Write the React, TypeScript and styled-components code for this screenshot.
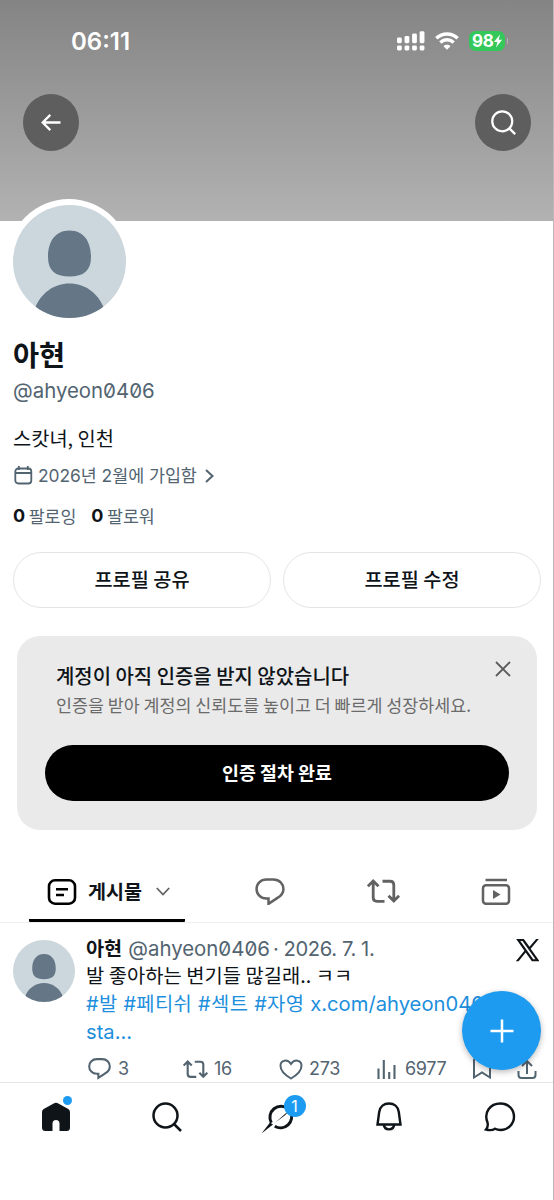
import React from 'react';
import styled, { createGlobalStyle } from 'styled-components';

const GlobalStyle = createGlobalStyle`
  *, *::before, *::after { box-sizing: border-box; }
  body { margin: 0; background: #fff; }
`;

const KR = `"Noto Sans CJK KR", sans-serif`;
const LATIN = `Inter, "Noto Sans CJK KR", sans-serif`;

const Screen = styled.div`
  width: 554px;
  height: 1200px;
  display: flex;
  flex-direction: column;
  overflow: hidden;
  background: #fff;
  border-right: 1px solid #b9b9b9;
  color: #0f1419;
  font-family: ${KR};
`;

const Banner = styled.header`
  flex: none;
  height: 221px;
  background: linear-gradient(#848484, #b2b2b2);
`;

const StatusBar = styled.div`
  height: 82px;
  padding: 0 45px 0 71px;
  display: flex;
  align-items: center;
  color: #fff;
`;

const Clock = styled.span`
  flex: 1;
  padding-top: 1px;
  font: 600 24px/30px Inter, sans-serif;
`;

const Battery = styled.span`
  display: flex;
  align-items: center;
  width: 36px;
  height: 20px;
  margin-left: 10px;
  padding-left: 3px;
  border-radius: 6.5px;
  background: #34c759;
  font: 700 17px/20px Inter, sans-serif;
  letter-spacing: -0.4px;
`;

const BatteryCap = styled.span`
  width: 1.5px;
  height: 6px;
  margin-left: 1.5px;
  border-radius: 0 2px 2px 0;
  background: #b5b5b5;
`;

const BannerNav = styled.nav`
  display: flex;
  justify-content: space-between;
  padding: 12px 22px 0 23px;
`;

const RoundButton = styled.button`
  width: 56px;
  height: 57px;
  padding: 0;
  border: 0;
  border-radius: 50%;
  background: #5e5e5e;
  color: #fff;
  display: grid;
  place-items: center;
`;

const Profile = styled.section`
  flex: none;
  display: flex;
  flex-direction: column;
  align-items: flex-start;
  padding: 0 12px 0 13px;
`;

const AvatarRing = styled.div`
  margin: -22px 0 0 -6px;
  padding: 5.5px;
  height: 124px;
  border-radius: 50%;
  background: #fff;
  position: relative;
`;

const Name = styled.h1`
  margin: 13px 0 0;
  font-size: 28.4px;
  font-weight: 700;
  line-height: 36px;
`;

const Handle = styled.span`
  font-family: ${LATIN};
  font-size: 20.4px;
  line-height: 28px;
  color: #536471;
  font-feature-settings: "zero";
`;

const ProfileHandle = styled(Handle)`
  margin-top: 5px;
`;

const Bio = styled.p`
  margin: 18px 0 0;
  font-size: 19.8px;
  line-height: 30px;
`;

const Joined = styled.div`
  display: flex;
  align-items: center;
  height: 26px;
  margin-top: 10px;
  color: #536471;
  font-family: ${LATIN};
  font-size: 17.4px;
  line-height: 24px;
  letter-spacing: -0.04px;

  span { margin: -1px 8px 0 5px; }
`;

const Follows = styled.div`
  display: flex;
  align-items: center;
  height: 26px;
  margin-top: 14px;
  font-size: 17.3px;
  line-height: 24px;
  color: #536471;

  b {
    font: 700 18px/24px Inter, sans-serif;
    color: #0f1419;
    margin-right: 3.5px;
  }
  span { margin: -1px 15px 0 0; }
`;

const ProfileActions = styled.div`
  align-self: stretch;
  display: grid;
  grid-template-columns: 1fr 1fr;
  gap: 12px;
  margin-top: 23px;
`;

const OutlineButton = styled.button`
  height: 56px;
  padding: 0 0 2px;
  border: 1.5px solid #e4e4e4;
  border-radius: 28px;
  background: #fff;
  color: #0f1419;
  font: 500 19.7px/28px ${KR};
`;

const VerifyCard = styled.section`
  flex: none;
  display: flex;
  flex-direction: column;
  height: 194px;
  margin: 28px 16px 0 17px;
  padding: 25px 28px 0;
  border-radius: 23px;
  background: #eaeaea;
`;

const CardHeading = styled.div`
  display: flex;
  justify-content: space-between;
  height: 84px;
`;

const CardCopy = styled.div`
  padding-left: 11px;
  white-space: nowrap;

  h2 {
    margin: 0;
    font-size: 19.95px;
    font-weight: 500;
    line-height: 30px;
  }
  p {
    margin: 0;
    font-size: 17.35px;
    line-height: 28px;
    color: #6b6b6b;
  }
`;

const CloseIcon = styled.svg`
  flex: none;
  margin: 0 -2px 0 0;
`;

const SolidButton = styled.button`
  height: 56px;
  padding: 0 0 2px;
  border: 0;
  border-radius: 28px;
  background: #000;
  color: #fff;
  font: 700 18.4px/28px ${KR};
`;

const Tabs = styled.nav`
  flex: none;
  display: flex;
  height: 93px;
  padding-left: 29px;
  border-bottom: 1px solid #eceeef;
`;

const Tab = styled.div`
  flex: 1;
  padding: 31px 1px 0 0;
  display: flex;
  align-items: center;
  justify-content: center;
  color: #626262;
`;

const ActiveTab = styled.div`
  flex: none;
  display: flex;
  align-items: center;
  width: 156px;
  margin-right: 29px;
  padding: 34px 0 0 18px;
  border-bottom: 3px solid #000;
  border-radius: 1px;
  color: #0f1419;
  font-size: 19.6px;
  line-height: 28px;
  font-weight: 700;

  span { margin: -2px 14px 0 11px; }
`;

const Tweet = styled.article`
  position: relative;
  flex: none;
  display: flex;
  height: 159px;
  padding: 12px 0 0 13px;
`;

const TweetAvatar = styled.div`
  flex: none;
  width: 73px;
  padding-top: 5px;
`;

const TweetBody = styled.div`
  flex: 1;
  min-width: 0;
`;

const TweetHead = styled.div`
  display: flex;
  align-items: center;
  height: 27px;
  padding-right: 14px;
  color: #536471;

  b {
    color: #0f1419;
    font-size: 19.7px;
    line-height: 27px;
    margin: -2px 6px 0 0;
  }
`;

const LogoSvg = styled.svg`
  margin-top: 3px;
`;

const TweetDate = styled.span`
  flex: 1;
  padding-left: 3px;
  font-family: ${LATIN};
  font-size: 20.2px;
  line-height: 27px;
  letter-spacing: -0.4px;
`;

const TweetText = styled.div`
  font-size: 19.85px;
`;

const TextLine = styled.p`
  margin: -1px 0 1px;
  height: 28px;
  line-height: 28px;
  white-space: nowrap;
`;

const Hashtags = styled.a`
  font-family: ${LATIN};
  color: #1d8fdd;
  letter-spacing: 0.35px;
`;

const Link = styled.a`
  font-family: ${LATIN};
  font-size: 20.2px;
  color: #1d8fdd;
`;

const Stats = styled.div`
  display: flex;
  align-items: center;
  height: 28px;
  margin: 10px 0 0 2px;
  color: #536471;
`;

const Stat = styled.div<{ $width: number; $gap?: number }>`
  flex: none;
  display: flex;
  align-items: center;
  gap: ${p => p.$gap ?? 6}px;
  width: ${p => p.$width}px;
  font: 400 18px/24px Inter, sans-serif;
  letter-spacing: -0.3px;
`;

const Compose = styled.button`
  position: absolute;
  right: 12px;
  top: 68px;
  width: 79px;
  height: 79px;
  padding: 0;
  border: 0;
  border-radius: 50%;
  background: #1d9bf0;
  box-shadow: 0 2px 6px rgba(0, 0, 0, 0.28);
  display: grid;
  place-items: center;
`;

const BottomBar = styled.nav`
  flex: 1;
  display: grid;
  grid-template-columns: repeat(5, 111px);
  align-items: start;
  justify-items: center;
  padding-top: 16px;
  border-top: 1px solid #e4e7e9;
  color: #0f1419;
  position: relative;
  background: #fff;
`;

const NavItem = styled.div<{ $top?: number }>`
  position: relative;
  height: 36px;
  padding-top: ${p => p.$top ?? 0}px;
`;

const Dot = styled.i`
  position: absolute;
  top: -3px;
  right: -1px;
  width: 9px;
  height: 9px;
  border-radius: 50%;
  background: #1d9bf0;
`;

const Badge = styled.span`
  position: absolute;
  top: -4px;
  right: -6px;
  width: 22px;
  height: 22px;
  border-radius: 50%;
  background: #1d9bf0;
  color: #fff;
  font: 400 16px/22px Inter, sans-serif;
  text-align: center;
`;

const Avatar = ({ size, id }: { size: number; id: string }) => (
  <svg width={size} height={size} viewBox="0 0 113 113" display="block">
    <clipPath id={id}><circle cx="56.5" cy="56.5" r="56.5" /></clipPath>
    <g clipPath={`url(#${id})`}>
      <rect width="113" height="113" fill="#ccd6dd" />
      <path fill="#657786" d="M56.5 25.5C71 25.5 78 37 78 52C78 65.500 71 71.500 56.500 71.500S35 65.500 35 52C35 37 42 25.500 56.500 25.500ZM56.500 78.500C72 78.500 85 88 91 103L91 113H22V103C28 88 41 78.500 56.500 78.500Z" />
    </g>
  </svg>
);

const SignalIcon = () => (
  <svg width="28" height="21" viewBox="0 0 28 21" fill="#fff">
    {[0, 1, 2, 3].map(i => (
      <g key={i}>
        <rect x={i * 7.55} y={[6.5, 5, 2.5, 0.2][i]} width="4.8" height={[5.7, 7.2, 9.7, 12][i]} rx="1.4" />
        <rect x={i * 7.55} y="14.5" width="4.8" height="5" rx="1.4" />
      </g>
    ))}
  </svg>
);

const WifiSvg = styled.svg`
  margin-left: 10px;
`;

const WifiIcon = () => (
  <WifiSvg width="24" height="18" viewBox="0 0 24 18" fill="none" stroke="#fff" strokeWidth="3.4">
    <path d="M1.300 6.300C7.300.500 16.700.500 22.700 6.300" />
    <path d="M5.300 10.500C9.200 6.900 14.800 6.900 18.700 10.500" />
    <path fill="#fff" stroke="none" d="M12 17.700L8.500 14.200C10.300 12.300 13.700 12.300 15.500 14.200Z" />
  </WifiSvg>
);

const BoltIcon = () => (
  <svg width="10" height="14" viewBox="0 0 9 14" fill="#fff">
    <path d="M6.500.5L.4 8H3.900L2.500 13.500L8.600 5.800H5.200Z" />
  </svg>
);

const SearchIcon = ({ size, stroke }: { size: number; stroke: number }) => (
  <svg width={size} height={size} viewBox="0 0 30 30" fill="none" stroke="currentColor" strokeWidth={stroke}>
    <circle cx="13.500" cy="13.500" r="12" />
    <path d="M22 22L29 29" />
  </svg>
);

const RepostIcon = ({ width, stroke }: { width: number; stroke: number }) => (
  <svg width={width} height={width * 0.73} viewBox="0 0 33 24" fill="none" stroke="currentColor" strokeWidth={stroke}>
    <path d="M.9 7.300L6.200 2L11.500 7.300M6.200 2.500V18.500Q6.200 22.300 10 22.300H17.500M15.500 2.200H23Q26.800 2.200 26.800 6V21.500M21.500 16.700L26.800 22L32.100 16.700" />
  </svg>
);

const ReplyIcon = ({ size, stroke }: { size: number; stroke: number }) => (
  <svg width={size} height={size * 0.93} viewBox="0 0 30 28" fill="none" stroke="currentColor" strokeWidth={stroke}>
    <path d="M11.500 1.500H18.500C24.500 1.500 28.500 6 28.500 11C28.500 15 26 18 22.500 20L13.500 26V20.700H11.500C5.500 20.700 1.500 16.200 1.500 11S5.500 1.500 11.500 1.500Z" />
  </svg>
);

export default function App() {
  return (
    <>
      <GlobalStyle />
      <Screen>
        <Banner>
          <StatusBar>
            <Clock>06:11</Clock>
            <SignalIcon />
            <WifiIcon />
            <Battery>98<BoltIcon /></Battery>
            <BatteryCap />
          </StatusBar>
          <BannerNav>
            <RoundButton aria-label="뒤로">
              <svg width="20" height="17" viewBox="0 0 20 17" fill="none" stroke="currentColor" strokeWidth="2.3">
                <path d="M9.300.9L1.700 8.500L9.300 16.100M1.700 8.500H19.500" />
              </svg>
            </RoundButton>
            <RoundButton aria-label="검색">
              <SearchIcon size={25} stroke={2.7} />
            </RoundButton>
          </BannerNav>
        </Banner>

        <Profile>
          <AvatarRing><Avatar size={113} id="profile-avatar" /></AvatarRing>
          <Name>아현</Name>
          <ProfileHandle>@ahyeon0406</ProfileHandle>
          <Bio>스캇녀, 인천</Bio>
          <Joined>
            <svg width="20" height="20" viewBox="0 0 20 20" fill="none" stroke="currentColor" strokeWidth="1.800">
              <rect x="2.300" y="2.500" width="16" height="15" rx="3" />
              <path d="M2.300 7H18.300M5.800 0V4M14.800 0V4" />
            </svg>
            <span>2026년 2월에 가입함</span>
            <svg width="9" height="14" viewBox="0 0 9 14" fill="none" stroke="currentColor" strokeWidth="2">
              <path d="M1 1L7.500 7L1 13" />
            </svg>
          </Joined>
          <Follows>
            <b>0</b><span>팔로잉</span>
            <b>0</b><span>팔로워</span>
          </Follows>
          <ProfileActions>
            <OutlineButton>프로필 공유</OutlineButton>
            <OutlineButton>프로필 수정</OutlineButton>
          </ProfileActions>
        </Profile>

        <VerifyCard>
          <CardHeading>
            <CardCopy>
              <h2>계정이 아직 인증을 받지 않았습니다</h2>
              <p>인증을 받아 계정의 신뢰도를 높이고 더 빠르게 성장하세요.</p>
            </CardCopy>
            <CloseIcon width="16" height="16" viewBox="0 0 16 16" stroke="#5c5c5c" strokeWidth="1.800">
              <path d="M1 1L15 15M15 1L1 15" />
            </CloseIcon>
          </CardHeading>
          <SolidButton>인증 절차 완료</SolidButton>
        </VerifyCard>

        <Tabs>
          <ActiveTab>
            <svg width="30" height="26" viewBox="0 0 30 26" fill="none" stroke="#000" strokeWidth="2.600">
              <rect x="2" y="1.300" width="26" height="23.400" rx="6" />
              <path d="M9 10.300H21M9 16H17" />
            </svg>
            <span>게시물</span>
            <svg width="14" height="9" viewBox="0 0 14 9" fill="none" stroke="#626262" strokeWidth="1.800">
              <path d="M.8 1L7 7.500L13.200 1" />
            </svg>
          </ActiveTab>
          <Tab><ReplyIcon size={30} stroke={2.5} /></Tab>
          <Tab><RepostIcon width={33} stroke={2.8} /></Tab>
          <Tab>
            <svg width="30" height="28" viewBox="0 0 30 28" fill="none" stroke="currentColor" strokeWidth="2.500">
              <path d="M4.500 2H26" />
              <rect x="2" y="7.300" width="26" height="18.500" rx="3" />
              <path fill="currentColor" stroke="none" d="M12 12V21L19.500 16.500Z" />
            </svg>
          </Tab>
        </Tabs>

        <Tweet>
          <TweetAvatar><Avatar size={62} id="post-avatar" /></TweetAvatar>
          <TweetBody>
            <TweetHead>
              <b>아현</b>
              <Handle>@ahyeon0406</Handle>
              <TweetDate>· 2026. 7. 1.</TweetDate>
              <LogoSvg width="23" height="24" viewBox="0 0 24 24" fill="#0f1419">
                <path fillRule="evenodd" d="M.2.4H8.200L14.100 8.700L21 .4H23.800L15.300 10.600L24.500 23.700H16.600L10.100 14.500L2.700 23.700H-.1L8.800 12.700ZM4.500 2.500L18 21.600H20.300L6.800 2.500Z" />
              </LogoSvg>
            </TweetHead>
            <TweetText>
              <TextLine>발 좋아하는 변기들 많길래.. ㅋㅋ</TextLine>
              <TextLine><Hashtags>#발 #페티쉬 #섹트 #자영 </Hashtags><Link>x.com/ahyeon0406-</Link></TextLine>
              <TextLine><Link>sta...</Link></TextLine>
            </TweetText>
            <Stats>
              <Stat $width={95} $gap={7}><ReplyIcon size={23} stroke={2.7} />3</Stat>
              <Stat $width={96}><RepostIcon width={25} stroke={2.8} />16</Stat>
              <Stat $width={98}>
                <svg width="24" height="21" viewBox="0 0 24 21" fill="none" stroke="currentColor" strokeWidth="2">
                  <path d="M12 19.500C5 15.500 1.500 11 1.500 6.800C1.500 1 8.500-.5 12 5C15.500-.5 22.500 1 22.500 6.800C22.500 11 19 15.500 12 19.500Z" />
                </svg>
                273
              </Stat>
              <Stat $width={95} $gap={9}>
                <svg width="19" height="20" viewBox="0 0 19 20" fill="none" stroke="currentColor" strokeWidth="2.100">
                  <path d="M1.500 9.500V20M6.800 1V20M12.200 13V20M17.500 6V20" />
                </svg>
                6977
              </Stat>
              <Stat $width={45}>
                <svg width="20" height="22" viewBox="0 0 20 22" fill="none" stroke="currentColor" strokeWidth="2">
                  <path d="M2 1V19.500L10 14.500L18 19.500V1" />
                </svg>
              </Stat>
              <Stat $width={22}>
                <svg width="20" height="22" viewBox="0 0 20 22" fill="none" stroke="currentColor" strokeWidth="2">
                  <path d="M1.500 13V17Q1.500 20 4.500 20H15.500Q18.500 20 18.500 17V13M10 16V3M5 8L10 3L15 8" />
                </svg>
              </Stat>
            </Stats>
          </TweetBody>
          <Compose aria-label="게시하기">
            <svg width="24" height="24" viewBox="0 0 24 24" stroke="#fff" strokeWidth="2.500">
              <path d="M12 .5V23.500M.5 12H23.500" />
            </svg>
          </Compose>
        </Tweet>

        <BottomBar>
          <NavItem>
            <svg width="30" height="36" viewBox="0 0 30 36" fill="currentColor">
              <path d="M12.700 4.500Q15 3 17.300 4.500L27.300 10Q29 11 29 13V28.500Q29 32 25.500 32H18.500V24.500Q18.500 21 15 21T11.500 24.500V32H4.500Q1 32 1 28.500V13Q1 11 2.700 10Z" />
            </svg>
            <Dot />
          </NavItem>
          <NavItem $top={3}><SearchIcon size={30} stroke={2.5} /></NavItem>
          <NavItem $top={3}>
            <svg width="44" height="32" viewBox="-2 0 44 32" fill="none" stroke="currentColor" strokeWidth="3">
              <path d="M13.300 20.800A11.200 11.200 0 0 1 30.300 6.800M32.500 9.700A11.200 11.200 0 0 1 16.800 24.300" />
              <path fill="currentColor" stroke="none" d="M3.500 31.500L12 20.500L15 22.500ZM17.300 20.500L33.800 6L26.800 13.500Z" />
            </svg>
            <Badge>1</Badge>
          </NavItem>
          <NavItem $top={3}>
            <svg width="26" height="30" viewBox="0 0 26 30" fill="none" stroke="currentColor" strokeWidth="2.400">
              <path d="M1.500 22.500L3.200 10C4 4.500 8 1.500 13 1.500S22 4.500 22.800 10L24.500 22.500ZM7.800 22.500C8.500 29 17.500 29 18.200 22.500" />
            </svg>
          </NavItem>
          <NavItem $top={3}>
            <svg width="32" height="31" viewBox="0 0 32 31" fill="none" stroke="currentColor" strokeWidth="2.400">
              <path d="M2 27.500Q4.500 24.500 3.500 20.500C-.5 10.500 6 1.500 16.500 1.500C24.500 1.500 30 7.500 30 14.800S24 28 16.500 28Q13.500 28 11 26.700Q7.500 29 2 27.500Z" />
            </svg>
          </NavItem>
        </BottomBar>
      </Screen>
    </>
  );
}
